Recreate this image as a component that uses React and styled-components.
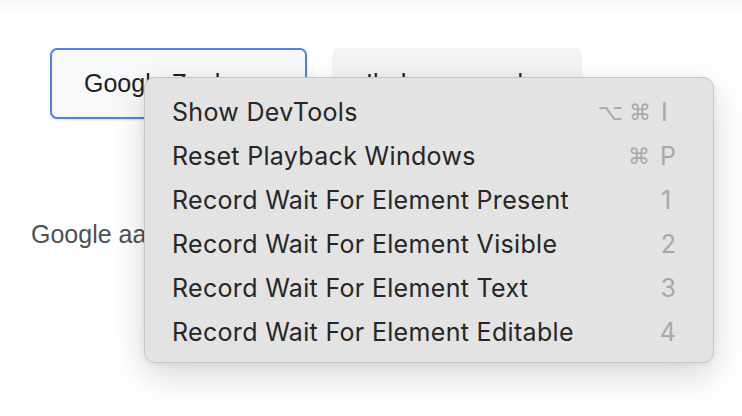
import React from "react";
import styled, { createGlobalStyle } from "styled-components";

const Global = createGlobalStyle`
  html, body { margin: 0; padding: 0; background: #ffffff; }
  body { font-family: "Liberation Sans", Arial, sans-serif; }
`;

const Page = styled.div`
  position: relative;
  width: 742px;
  height: 416px;
  overflow: hidden;
  background: #ffffff;
`;

const TopShade = styled.div`
  height: 16px;
  background: linear-gradient(to bottom, #f6f6f6, #ffffff);
`;

const Content = styled.div`
  padding: 32px 0 0 31px;
`;

const ButtonRow = styled.div`
  display: flex;
  gap: 25px;
  margin-left: 19px;
`;

const SearchButton = styled.div`
  box-sizing: border-box;
  width: ${(p) => p.$w}px;
  height: 71px;
  display: flex;
  align-items: center;
  padding-left: ${(p) => (p.$focused ? 32 : 34)}px;
  border-radius: 7px;
  border: ${(p) => (p.$focused ? "2px solid #4f82ea" : "none")};
  background: ${(p) => (p.$focused ? "#f8f9fb" : "#f3f4f5")};
  box-shadow: ${(p) => (p.$focused ? "0 1px 2px rgba(0,0,0,0.12)" : "none")};
  font-size: 25px;
  color: #1f1f1f;
`;

const Locale = styled.p`
  margin: 100px 0 0;
  font-size: 25px;
  line-height: 30px;
  color: #4d5156;
`;

const Menu = styled.div`
  position: absolute;
  left: 144px;
  top: 77px;
  width: 570px;
  box-sizing: border-box;
  padding: 12px 37px 8px 27px;
  background: #e3e3e3;
  border: 1px solid #c6c6c6;
  border-radius: 11px;
  box-shadow: 0 12px 36px rgba(0, 0, 0, 0.16), 0 2px 6px rgba(0, 0, 0, 0.06);
  font-family: Inter, "Noto Sans", sans-serif;
`;

const Item = styled.div`
  height: 44px;
  display: flex;
  align-items: center;
  justify-content: space-between;
`;

const Label = styled.span`
  font-size: 25px;
  color: #262626;
  letter-spacing: 0.32px;
`;

const Shortcut = styled.span`
  display: flex;
  align-items: center;
  gap: 6px;
  color: #a8a8a8;
`;

const Sym = styled.span`
  font-family: "DejaVu Sans", sans-serif;
  font-size: 22px;
`;

const Key = styled.span`
  min-width: 15px;
  margin-left: 4px;
  font-size: 25px;
  text-align: left;
`;

const items = [
  { label: "Show DevTools", mods: ["⌥", "⌘"], key: "I" },
  { label: "Reset Playback Windows", mods: ["⌘"], key: "P" },
  { label: "Record Wait For Element Present", mods: [], key: "1" },
  { label: "Record Wait For Element Visible", mods: [], key: "2" },
  { label: "Record Wait For Element Text", mods: [], key: "3" },
  { label: "Record Wait For Element Editable", mods: [], key: "4" },
];

export default function App() {
  return (
    <Page>
      <Global />
      <TopShade />
      <Content>
        <ButtonRow>
          <SearchButton $focused $w={257}>Google Zoeken</SearchButton>
          <SearchButton $w={250}>Ik doe een gok</SearchButton>
        </ButtonRow>
        <Locale>Google aangeboden in: Frysk</Locale>
      </Content>
      <Menu>
        {items.map((it) => (
          <Item key={it.label}>
            <Label>{it.label}</Label>
            <Shortcut>
              {it.mods.map((m) => (
                <Sym key={m}>{m}</Sym>
              ))}
              <Key>{it.key}</Key>
            </Shortcut>
          </Item>
        ))}
      </Menu>
    </Page>
  );
}
